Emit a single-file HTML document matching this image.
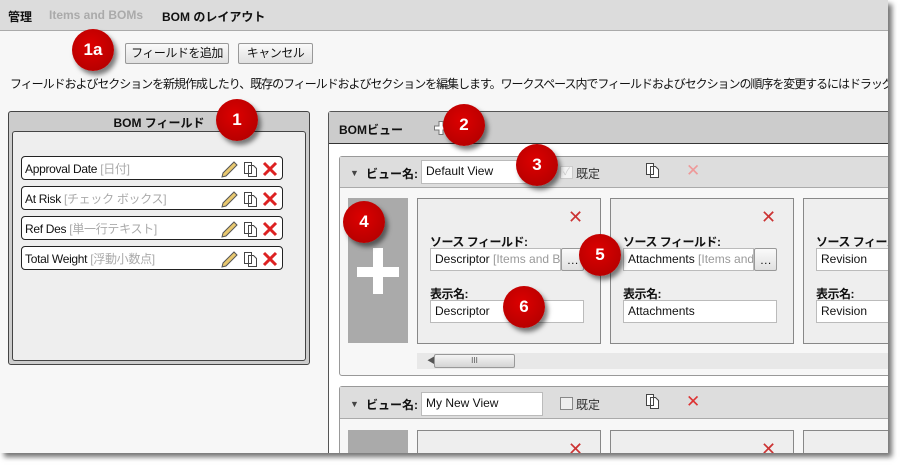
<!DOCTYPE html>
<html><head><meta charset="utf-8"><style>
*{box-sizing:border-box;margin:0;padding:0}
body{width:902px;height:468px;background:#fff;position:relative;overflow:hidden;font-family:"Liberation Sans","Noto Sans CJK JP",sans-serif;font-size:12px;color:#111}
.a{position:absolute}
#frame{left:0;top:0;width:888px;height:453px;background:#f7f7f7;overflow:hidden;box-shadow:4px 4px 5px rgba(0,0,0,.55)}
.badge{position:absolute;width:42px;height:42px;border-radius:50%;background:radial-gradient(circle at 45% 40%,#d00,#a00);color:#fff;font-weight:bold;font-size:17px;text-align:center;line-height:42px;box-shadow:3px 4px 5px rgba(0,0,0,.5);z-index:5}
.btn{position:absolute;height:21px;border:1px solid #999;border-radius:2px;background:linear-gradient(#fafafa,#e0e0e0);font-size:12px;line-height:19px;text-align:center;letter-spacing:-0.5px}
.row{position:absolute;left:21px;width:262px;height:24px;background:#fff;border:1px solid #222;border-radius:4px;padding:3px 0 0 3px;font-size:12px;letter-spacing:-0.3px}
.row span{color:#aaa}
.inp{position:absolute;background:#fff;border:1px solid #bbb;font-size:12px;padding:3px 4px;white-space:nowrap;overflow:hidden}
.card{position:absolute;top:0;width:184px;height:146px;background:#eee;border:1px solid #888}
.lbl{position:absolute;left:12px;font-weight:bold;font-size:12px;letter-spacing:-0.5px}
</style></head><body>
<div id="frame" class="a">
<div class="a" style="left:0;top:0;width:888px;height:31px;background:#dcdcdc;border-bottom:1px solid #aaa"></div>
<div class="a" style="left:8px;top:8px;font-weight:bold">管理</div>
<div class="a" style="left:49px;top:8px;font-weight:bold;color:#aaa">Items and BOMs</div>
<div class="a" style="left:162px;top:8px;font-weight:bold">BOM のレイアウト</div>
<div class="btn" style="left:125px;top:43px;width:104px">フィールドを追加</div>
<div class="btn" style="left:238px;top:43px;width:75px">キャンセル</div>
<div class="a" style="left:10px;top:75px;white-space:nowrap;letter-spacing:-1.05px">フィールドおよびセクションを新規作成したり、既存のフィールドおよびセクションを編集します。ワークスペース内でフィールドおよびセクションの順序を変更するにはドラッグします。</div>

<div class="a" style="left:8px;top:111px;width:302px;height:254px;background:#ccc;border:1px solid #444;border-radius:3px"></div>
<div class="a" style="left:8px;top:114px;width:302px;text-align:center;font-weight:bold">BOM フィールド</div>
<div class="a" style="left:12px;top:131px;width:294px;height:230px;background:#eee;border:1px solid #444;border-radius:3px"></div>
<div class="row" style="top:156px">Approval Date <span>[日付]</span></div>
<div class="row" style="top:186px">At Risk <span>[チェック ボックス]</span></div>
<div class="row" style="top:216px">Ref Des <span>[単一行テキスト]</span></div>
<div class="row" style="top:246px">Total Weight <span>[浮動小数点]</span></div>

<div class="a" style="left:328px;top:111px;width:570px;height:360px;background:#fff;border:1px solid #555;border-radius:3px"></div>
<div class="a" style="left:329px;top:112px;width:570px;height:32px;background:#ccc;border-bottom:1px solid #333"></div>
<div class="a" style="left:339px;top:121px;font-weight:bold">BOMビュー</div>
<svg class="a" style="left:433px;top:120px" width="16" height="16"><path d="M6 1.5h4v4.5h4.5v4h-4.5v4.5h-4v-4.5h-4.5v-4h4.5z" fill="#fff" stroke="#777"/></svg>

<!-- view 1 -->
<div class="a" style="left:339px;top:156px;width:560px;height:220px;background:#f7f7f7;border:1px solid #999;border-radius:3px"></div>
<div class="a" style="left:340px;top:157px;width:560px;height:31px;background:#ddd;border-bottom:1px solid #aaa"></div>
<div class="a" style="left:350px;top:168px;font-size:9px;color:#444">▼</div>
<div class="a" style="left:366px;top:165px;font-weight:bold">ビュー名:</div>
<div class="inp" style="left:421px;top:160px;width:122px;height:24px">Default View</div>
<div class="a" style="left:560px;top:166px;width:13px;height:13px;border:1px solid #ccc;background:#f4f4f4;color:#ccc;font-size:10px;line-height:11px;text-align:center">✓</div>
<div class="a" style="left:576px;top:165px;color:#333">既定</div>
<svg class="a" style="left:645px;top:162px" width="16" height="16"><path d="M1.5 1.5h7v11h-7z M5.5 4.5h5l3 3v8h-8z" fill="#fff" stroke="#444"/></svg>
<div class="a" style="left:686px;top:161px;font-size:17px;color:#e99">✕</div>
<div class="a" style="left:348px;top:198px;width:60px;height:145px;background:#aaa"></div>
<div class="a" style="left:357px;top:248px;width:43px;height:46px"><div class="a" style="left:0;top:19px;width:42px;height:10px;background:#fff"></div><div class="a" style="left:16px;top:0;width:10px;height:46px;background:#fff"></div></div>
<div class="a" style="left:417px;top:198px;width:480px;height:146px">
 <div class="card" style="left:0"><div class="a" style="left:150px;top:8px;font-size:18px;color:#c33">✕</div><div class="lbl" style="top:34px">ソース フィールド:</div>
 <div class="inp" style="left:12px;top:49px;width:131px;height:23px">Descriptor <span style="color:#999">[Items and BOMs]</span></div><div class="btn" style="left:143px;top:49px;width:23px;height:23px;line-height:22px">…</div>
 <div class="lbl" style="top:86px">表示名:</div><div class="inp" style="left:12px;top:101px;width:154px;height:23px">Descriptor</div></div>
 <div class="card" style="left:193px"><div class="a" style="left:150px;top:8px;font-size:18px;color:#c33">✕</div><div class="lbl" style="top:34px">ソース フィールド:</div>
 <div class="inp" style="left:12px;top:49px;width:131px;height:23px">Attachments <span style="color:#999">[Items and BOMs]</span></div><div class="btn" style="left:143px;top:49px;width:23px;height:23px;line-height:22px">…</div>
 <div class="lbl" style="top:86px">表示名:</div><div class="inp" style="left:12px;top:101px;width:154px;height:23px">Attachments</div></div>
 <div class="card" style="left:386px"><div class="lbl" style="top:34px">ソース フィールド:</div>
 <div class="inp" style="left:12px;top:49px;width:131px;height:23px">Revision</div>
 <div class="lbl" style="top:86px">表示名:</div><div class="inp" style="left:12px;top:101px;width:154px;height:23px">Revision</div></div>
</div>
<div class="a" style="left:417px;top:353px;width:480px;height:16px;background:#e8e8e8"></div>
<div class="a" style="left:427px;top:355px;font-size:8px;color:#555">◀</div>
<div class="a" style="left:434px;top:354px;width:81px;height:14px;background:linear-gradient(#f4f4f4,#d4d4d4);border:1px solid #999;border-radius:2px;font-size:8px;text-align:center;line-height:12px;color:#555">III</div>

<!-- view 2 -->
<div class="a" style="left:339px;top:386px;width:560px;height:90px;background:#f7f7f7;border:1px solid #999;border-radius:3px"></div>
<div class="a" style="left:340px;top:387px;width:560px;height:32px;background:#ddd;border-bottom:1px solid #aaa"></div>
<div class="a" style="left:350px;top:399px;font-size:9px;color:#444">▼</div>
<div class="a" style="left:366px;top:396px;font-weight:bold">ビュー名:</div>
<div class="inp" style="left:421px;top:392px;width:122px;height:24px">My New View</div>
<div class="a" style="left:560px;top:397px;width:13px;height:13px;border:1px solid #888;background:#eee"></div>
<div class="a" style="left:576px;top:396px;color:#333">既定</div>
<svg class="a" style="left:645px;top:393px" width="16" height="16"><path d="M1.5 1.5h7v11h-7z M5.5 4.5h5l3 3v8h-8z" fill="#fff" stroke="#444"/></svg>
<div class="a" style="left:686px;top:392px;font-size:17px;color:#d33">✕</div>
<div class="a" style="left:348px;top:430px;width:60px;height:40px;background:#aaa"></div>
<div class="a" style="left:417px;top:430px;width:184px;height:40px;background:#eee;border:1px solid #888"><div class="a" style="left:150px;top:8px;font-size:18px;color:#c33">✕</div></div>
<div class="a" style="left:610px;top:430px;width:184px;height:40px;background:#eee;border:1px solid #888"><div class="a" style="left:150px;top:8px;font-size:18px;color:#c33">✕</div></div>
<div class="a" style="left:803px;top:430px;width:184px;height:40px;background:#eee;border:1px solid #888"></div>
</div>

<div class="badge" style="left:72px;top:29px">1a</div>
<div class="badge" style="left:216px;top:99px">1</div>
<div class="badge" style="left:443px;top:104px">2</div>
<div class="badge" style="left:516px;top:144px">3</div>
<div class="badge" style="left:343px;top:201px">4</div>
<div class="badge" style="left:579px;top:234px">5</div>
<div class="badge" style="left:503px;top:286px">6</div>
<svg class="a" style="left:220px;top:156px" width="62" height="120">
<g id="ics">
<path d="M3 17 L14 6 L17 9 L6 20 L2 21 Z" fill="#e8c870" stroke="#555"/>
<path d="M24.5 6.5h7v11h-7z M28.5 9.5h5l3 3v8h-8z" fill="#fff" stroke="#444"/>
<path d="M44 7 L56 19 M56 7 L44 19" stroke="#d22" stroke-width="3"/>
</g>
<use href="#ics" y="30"/><use href="#ics" y="60"/><use href="#ics" y="90"/>
</svg>
</body></html>
